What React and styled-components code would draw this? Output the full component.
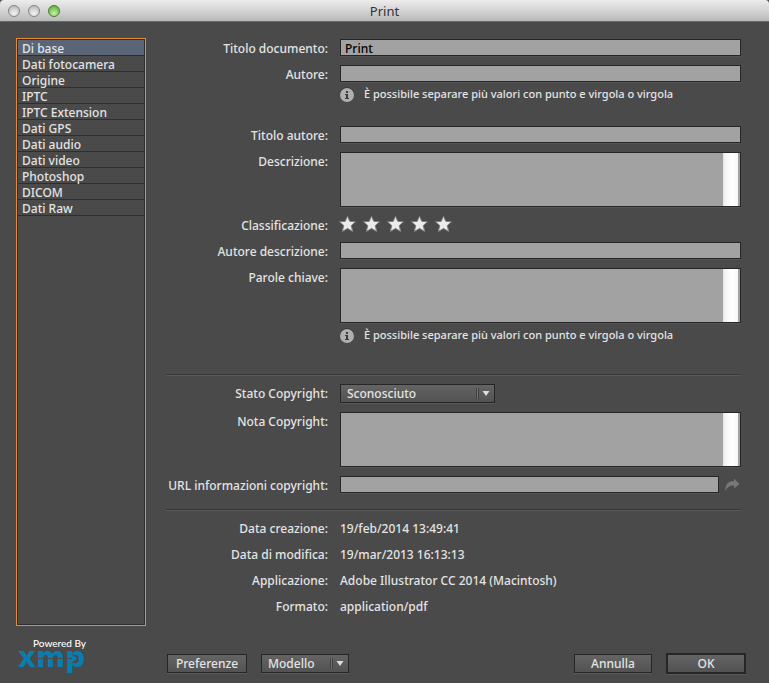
import React, { useState } from 'react';
import styled, { createGlobalStyle } from 'styled-components';

const sections = [
	'Di base',
	'Dati fotocamera',
	'Origine',
	'IPTC',
	'IPTC Extension',
	'Dati GPS',
	'Dati audio',
	'Dati video',
	'Photoshop',
	'DICOM',
	'Dati Raw',
];

const facts = [
	['Data creazione:', '19/feb/2014 13:49:41'],
	['Data di modifica:', '19/mar/2013 16:13:13'],
	['Applicazione:', 'Adobe Illustrator CC 2014 (Macintosh)'],
	['Formato:', 'application/pdf'],
];

function Hint() {
	return (
		<HintRow>
			<svg width="16" height="16" viewBox="0 0 16 16" aria-hidden="true">
				<circle cx="7" cy="7.2" r="7" fill="#2f2f2f" />
				<circle cx="7" cy="8" r="7" fill="#b0b0b0" />
				<rect x="6" y="4" width="2" height="2" fill="#3c3c3c" />
				<path d="M5 7h3v4h1v1H5v-1h1V8H5z" fill="#3c3c3c" />
			</svg>
			<HintText>È possibile separare più valori con punto e virgola o virgola</HintText>
		</HintRow>
	);
}

function Field({ id, label, children }) {
	return (
		<Row>
			<Label htmlFor={id}>{label}</Label>
			<Control>{children}</Control>
		</Row>
	);
}

function Dropdown({ id, label, options, wide }) {
	return (
		<SelectBox $wide={wide}>
			<Select id={id} aria-label={label}>
				{options.map((option) => <option key={option}>{option}</option>)}
			</Select>
			<SelectMark width="20" height="15" viewBox="0 0 20 15" aria-hidden="true">
				<path d="M1.5 2v11M3.5 2v11" stroke="#404040" />
				<path d="M2.5 2v11" stroke="#727272" />
				<path d="M7.500 5h7l-3.500 5z" fill="#dedede" />
			</SelectMark>
		</SelectBox>
	);
}

function Rating() {
	return (
		<Row>
			<Label as="span" id="rating">Classificazione:</Label>
			<Stars role="group" aria-labelledby="rating">
				{[1, 2, 3, 4, 5].map((n) => (
					<StarButton type="button" key={n} aria-label={`${n}`}>
						<svg width="18" height="17" viewBox="0 0 18 17">
							<path
								d="M9.500 .3l2.300 5.100 5.700.4-4.300 3.800 1.500 5.900-5.200-3.100-5.200 3.100 1.500-5.900L1.500 5.800l5.700-.4z"
								fill="#ececec"
								stroke="#808080"
								strokeWidth="1"
							/>
						</svg>
					</StarButton>
				))}
			</Stars>
		</Row>
	);
}

function Logo() {
	return (
		<LogoBox>
			<LogoCaption>Powered By</LogoCaption>
			<svg width="70" height="26" viewBox="0 0 70 26" role="img" aria-label="xmp">
				<text x="0" y="18" fontFamily="DejaVu Sans" fontWeight="bold" fontSize="28" fill="#0a7db0">xmp</text>
				<path d="M19 9.500h36" stroke="#4a4a4a" />
				<path d="M54 5l6 4.500-6 4.500" stroke="#4a4a4a" fill="#0a7db0" />
			</svg>
		</LogoBox>
	);
}

function App() {

	const [current, setCurrent] = useState('Di base');

	return (
		<Window>
			<GlobalStyle />
			<TitleBar>
				<Lights>
					<Light type="button" aria-label="Chiudi" />
					<Light type="button" aria-label="Riduci" />
					<Light type="button" aria-label="Ingrandisci" $green />
				</Lights>
				<Title>Print</Title>
			</TitleBar>
			<Main>
				<Sidebar>
					<SectionList>
						{sections.map((name) => (
							<li key={name}>
								<SectionButton type="button" $active={name === current} onClick={() => setCurrent(name)}>
									{name}
								</SectionButton>
							</li>
						))}
					</SectionList>
				</Sidebar>
				<Form>
					<Group>
						<Field id="title" label="Titolo documento:">
							<Input id="title" type="text" defaultValue="Print" />
						</Field>
						<Field id="author" label="Autore:">
							<Input id="author" type="text" />
							<Hint />
						</Field>
					</Group>
					<Group $top={23}>
						<Field id="authorTitle" label="Titolo autore:">
							<Input id="authorTitle" type="text" />
						</Field>
						<Field id="description" label="Descrizione:">
							<TextArea id="description" />
						</Field>
						<Rating />
						<Field id="writer" label="Autore descrizione:">
							<Input id="writer" type="text" />
						</Field>
						<Field id="keywords" label="Parole chiave:">
							<TextArea id="keywords" />
							<Hint />
						</Field>
					</Group>
					<Divider $top={30} />
					<Group $top={8}>
						<Field id="status" label="Stato Copyright:">
							<Dropdown id="status" options={['Sconosciuto']} wide />
						</Field>
						<Field id="notice" label="Nota Copyright:">
							<TextArea id="notice" />
						</Field>
						<Field id="url" label="URL informazioni copyright:">
							<UrlLine>
								<Input id="url" type="text" />
								<GoButton type="button" aria-label="Vai a URL" disabled>
									<svg width="16" height="14" viewBox="0 0 16 14">
										<path d="M.5 13C0 6 3.500 3 9 3V.5L14.500 6 9 10.500V7.500C5 7.200 2.500 9 .5 13z" fill="#777" />
									</svg>
								</GoButton>
							</UrlLine>
						</Field>
					</Group>
					<Divider $top={16} />
					<Facts>
						{facts.map(([name, value]) => (
							<Row key={name}>
								<Label as="dt">{name}</Label>
								<FactValue>{value}</FactValue>
							</Row>
						))}
					</Facts>
				</Form>
			</Main>
			<Footer>
				<Logo />
				<Buttons>
					<Button type="button">Preferenze</Button>
					<Dropdown label="Modello" options={['Modello']} />
				</Buttons>
				<Buttons>
					<Button type="button" $narrow>Annulla</Button>
					<Button type="submit" $main>OK</Button>
				</Buttons>
			</Footer>
		</Window>
	);
}

export default App;


const GlobalStyle = createGlobalStyle`
	* {
		box-sizing: border-box;
	}
	body {
		margin: 0;
		background: #4a4a4a;
	}
	body, button, input, select, textarea {
		font-family: 'Noto Sans', 'Open Sans', sans-serif;
		font-size: 12px;
		font-weight: 500;
		line-height: 17px;
		color: #e4e4e4;
	}
`;
const Window = styled.div`
	min-height: 100vh;
	display: flex;
	flex-direction: column;
`;
const TitleBar = styled.header`
	height: 22px;
	display: grid;
	grid-template-columns: 1fr auto 1fr;
	align-items: center;
	padding: 0 8px;
	background: linear-gradient(#ededed, #b9b9b9);
	border-bottom: 1px solid #686868;
	border-radius: 4px 4px 0 0;
`;
const Lights = styled.div`
	display: flex;
	gap: 8px;
`;
const Light = styled.button`
	width: 12px;
	height: 12px;
	padding: 0;
	border: 1px solid ${({ $green }) => ($green ? '#4c7a35' : '#848484')};
	border-radius: 50%;
	background: ${({ $green }) => ($green
		? 'radial-gradient(circle at 50% 75%, #c6f3a0, #6cb64a 75%)'
		: 'radial-gradient(circle at 50% 75%, #f4f4f4, #b8b8b8 90%)')};
`;
const Title = styled.h1`
	margin: 0;
	font-size: 13px;
	font-weight: 400;
	line-height: 20px;
	color: #333;
`;
const Main = styled.main`
	flex: 1;
	display: flex;
	gap: 20px;
	padding: 16px 28px 0 16px;
`;
const Sidebar = styled.nav`
	flex: none;
	width: 130px;
	border: 1px solid #e88b2d;
`;
const SectionList = styled.ul`
	height: 100%;
	margin: 0;
	padding: 0;
	list-style: none;
	border: 1px solid #2e2e2e;
`;
const SectionButton = styled.button`
	display: block;
	width: 100%;
	height: 16px;
	padding: 1px 4px 0;
	border: 0;
	border-bottom: 1px solid #2e2e2e;
	background: ${({ $active }) => ($active ? '#5a6577' : 'transparent')};
	text-align: left;
	line-height: 16px;
`;
const Form = styled.form`
	flex: 1;
	min-width: 0;
	padding-top: 1px;
`;
const Group = styled.div`
	display: flex;
	flex-direction: column;
	gap: 9px;
	margin-top: ${({ $top }) => $top || 0}px;
`;
const Row = styled.div`
	display: flex;
	gap: 12px;
`;
const Label = styled.label`
	flex: none;
	width: 162px;
	height: 17px;
	margin: 0;
	line-height: 19px;
	text-align: right;
	white-space: nowrap;
`;
const Control = styled.div`
	flex: 1;
	min-width: 0;
`;
const Input = styled.input`
	display: block;
	width: 100%;
	height: 17px;
	padding: 1px 4px 0;
	border: 1px solid #262626;
	outline: none;
	background: #a2a2a2;
	box-shadow: 0 1px 0 #555;
	color: #000;
`;
const TextArea = styled.textarea`
	display: block;
	width: 100%;
	height: 55px;
	padding: 0 20px 0 4px;
	border: 1px solid #262626;
	outline: none;
	resize: none;
	background: linear-gradient(to right, #e6e6e6, #f6f6f6 20%, #fff 60%, #f8f8f8) right 2px top / 15px 100% no-repeat #a2a2a2;
	box-shadow: 0 1px 0 #555;
	color: #000;
`;
const HintRow = styled.div`
	display: flex;
	gap: 8px;
	margin-top: 5px;
	height: 16px;
`;
const HintText = styled.span`
	font-size: 11px;
	line-height: 14px;
	white-space: nowrap;
`;
const Stars = styled.div`
	display: flex;
	gap: 6px;
	margin-left: -2px;
`;
const StarButton = styled.button`
	width: 18px;
	height: 17px;
	padding: 0;
	border: 0;
	background: none;
	svg {
		display: block;
	}
`;
const Divider = styled.hr`
	height: 2px;
	margin: ${({ $top }) => $top}px 0 0;
	border: 0;
	border-top: 1px solid #363636;
	background: #595959;
`;
const UrlLine = styled.div`
	display: flex;
	gap: 6px;
`;
const GoButton = styled.button`
	flex: none;
	height: 17px;
	padding: 0;
	border: 0;
	background: none;
	svg {
		display: block;
	}
`;
const Facts = styled.dl`
	display: flex;
	flex-direction: column;
	gap: 9px;
	margin: 8px 0 0;
`;
const FactValue = styled.dd`
	height: 17px;
	margin: 0;
	line-height: 19px;
`;
const SelectBox = styled.div`
	position: relative;
	width: ${({ $wide }) => ($wide ? 155 : 88)}px;
`;
const Select = styled.select`
	display: block;
	appearance: none;
	width: 100%;
	height: 19px;
	padding: 0 20px 0 6px;
	border: 1px solid #262626;
	border-radius: 0;
	background: linear-gradient(#646464, #525252);
	box-shadow: 0 1px 0 #595959;
`;
const SelectMark = styled.svg`
	position: absolute;
	top: 2px;
	right: 0;
	pointer-events: none;
`;
const Footer = styled.footer`
	display: flex;
	align-items: flex-end;
	height: 57px;
	padding: 11px 23px 9px 18px;
`;
const LogoBox = styled.div`
	align-self: flex-start;
	width: 149px;
	svg {
		display: block;
		overflow: visible;
	}
`;
const LogoCaption = styled.div`
	width: 68px;
	font-family: Lato, sans-serif;
	font-size: 10px;
	line-height: 12px;
	text-align: right;
	color: #fff;
`;
const Buttons = styled.div`
	display: flex;
	align-items: center;
	gap: 14px;
	height: 21px;
	&:last-child {
		margin-left: auto;
	}
`;
const Button = styled.button`
	width: ${({ $narrow }) => ($narrow ? 78 : 80)}px;
	height: ${({ $main }) => ($main ? 21 : 19)}px;
	padding: 0;
	border: ${({ $main }) => ($main ? 2 : 1)}px solid #262626;
	background: linear-gradient(#646464, #525252);
	box-shadow: 0 1px 0 #595959;
`;
